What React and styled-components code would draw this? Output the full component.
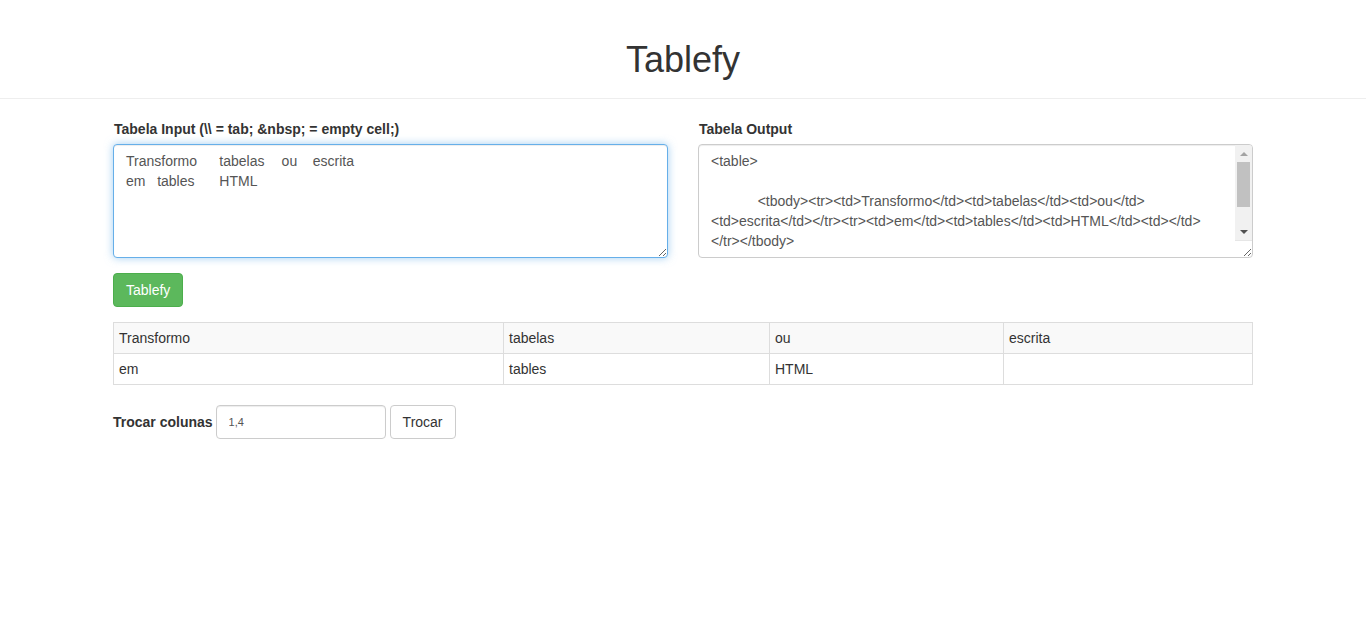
import React, { useState } from 'react';
import styled, { createGlobalStyle } from 'styled-components';

const GlobalStyle = createGlobalStyle`
    * { box-sizing: border-box; }
    body {
        margin: 0;
        background: #fff;
        color: #333;
        font-family: "Liberation Sans", Arial, sans-serif;
        font-size: 14px;
        line-height: 20px;
    }
`

const rows = [
    ['Transformo', 'tabelas', 'ou', 'escrita'],
    ['em', 'tables', 'HTML', ''],
]
const colWidths = [390, 266, 234, 249]

const toInput = (data) => data.map(r => r.join('\t')).join('\n')
const toHtml = (data) =>
    '<table>\n\n            <tbody>' +
    data.map(r => '<tr>' + r.map(c => `<td>${c}</td>`).join('') + '</tr>').join('') +
    '</tbody>\n\n        </table>\n'

const App = () => {
    const [input, setInput] = useState(toInput(rows))
    const [swap, setSwap] = useState('1,4')

    return (
        <>
            <GlobalStyle />
            <Header>
                <Title>Tablefy</Title>
            </Header>
            <Container>
                <Row>
                    <Column>
                        <Label>Tabela Input (\\ = tab; &amp;nbsp; = empty cell;)</Label>
                        <TextArea $focused value={input} onChange={(e) => setInput(e.target.value)} />
                    </Column>
                    <Column>
                        <Label>Tabela Output</Label>
                        <OutputWrap>
                            <TextArea $scroll readOnly value={toHtml(rows)} />
                            <ScrollBar>
                                <Arrow $up />
                                <Thumb />
                                <Arrow />
                            </ScrollBar>
                        </OutputWrap>
                    </Column>
                </Row>
                <GreenButton>Tablefy</GreenButton>
                <Table>
                    <colgroup>
                        {colWidths.map((w, i) => <Col key={i} $w={w} />)}
                    </colgroup>
                    <tbody>
                        {rows.map((r, i) => (
                            <Tr key={i} $striped={i % 2 === 0}>
                                {r.map((c, j) => <Td key={j}>{c}</Td>)}
                            </Tr>
                        ))}
                    </tbody>
                </Table>
                <SwapForm>
                    <SwapLabel>Trocar colunas</SwapLabel>
                    <SwapInput value={swap} onChange={(e) => setSwap(e.target.value)} />
                    <DefaultButton>Trocar</DefaultButton>
                </SwapForm>
            </Container>
        </>
    );
}

export default App;

const Header = styled.header`
    padding: 40px 0 18px;
    border-bottom: 1px solid #eee;
    text-align: center;
`

const Title = styled.h1`
    margin: 0;
    font-size: 36px;
    line-height: 40px;
    font-weight: 500;
    color: #333;
`

const Container = styled.div`
    width: 1170px;
    margin: 0 auto;
    padding: 20px 15px 0;
`

const Row = styled.div`
    display: grid;
    grid-template-columns: 1fr 1fr;
    column-gap: 30px;
    margin-bottom: 15px;
`

const Column = styled.div`
    display: flex;
    flex-direction: column;
`

const Label = styled.label`
    font-weight: bold;
    margin-bottom: 5px;
    padding-left: 1px;
`

const OutputWrap = styled.div`
    position: relative;
`

const TextArea = styled.textarea`
    display: block;
    width: 100%;
    height: 114px;
    padding: 6px ${p => p.$scroll ? '29px' : '12px'} 6px 12px;
    font-family: "Liberation Sans", Arial, sans-serif;
    font-size: 14px;
    line-height: 20px;
    color: #555;
    background: #fff;
    border: 1px solid ${p => p.$focused ? '#66afe9' : '#ccc'};
    border-radius: 4px;
    box-shadow: inset 0 1px 1px rgba(0,0,0,.075)${p => p.$focused ? ', 0 0 8px rgba(102,175,233,.6)' : ''};
    outline: none;
    resize: vertical;
    tab-size: 8;
    white-space: pre-wrap;
    overflow: hidden;
`

const ScrollBar = styled.div`
    position: absolute;
    top: 1px;
    right: 1px;
    bottom: 17px;
    width: 17px;
    display: flex;
    flex-direction: column;
    background: #f1f1f1;
    border-top-right-radius: 3px;
    border-bottom: 1px solid #e6e6e6;
`

const Arrow = styled.div`
    height: 17px;
    display: flex;
    align-items: center;
    justify-content: center;
    margin-top: ${p => p.$up ? '0' : 'auto'};

    &::before {
        content: '';
        width: 0;
        height: 0;
        border-left: 4px solid transparent;
        border-right: 4px solid transparent;
        ${p => p.$up
            ? 'border-bottom: 4px solid #a3a3a3;'
            : 'border-top: 4px solid #505050;'}
    }
`

const Thumb = styled.div`
    height: 45px;
    margin: 0 2px;
    background: #c1c1c1;
`

const GreenButton = styled.button`
    display: inline-block;
    height: 34px;
    padding: 6px 12px;
    font-family: inherit;
    font-size: 14px;
    line-height: 20px;
    color: #fff;
    background: #5cb85c;
    border: 1px solid #4cae4c;
    border-radius: 4px;
    cursor: pointer;
    align-self: flex-start;
`

const Table = styled.table`
    width: 1139px;
    margin: 15px 0 20px;
    border-collapse: collapse;
    border: 1px solid #ddd;
    table-layout: fixed;
`

const Col = styled.col`
    width: ${p => p.$w}px;
`

const Tr = styled.tr`
    background: ${p => p.$striped ? '#f9f9f9' : '#fff'};
`

const Td = styled.td`
    padding: 5px;
    border: 1px solid #ddd;
    line-height: 20px;
    color: #333;
`

const SwapForm = styled.div`
    display: flex;
    align-items: center;
    gap: 4px;
`

const SwapLabel = styled.label`
    font-weight: bold;
    margin-right: -1px;
`

const SwapInput = styled.input`
    width: 170px;
    height: 34px;
    padding: 5px 12px;
    font-family: inherit;
    font-size: 11px;
    color: #555;
    border: 1px solid #ccc;
    border-radius: 4px;
    box-shadow: inset 0 1px 1px rgba(0,0,0,.075);
    outline: none;
`

const DefaultButton = styled.button`
    height: 34px;
    padding: 6px 12px;
    font-family: inherit;
    font-size: 14px;
    line-height: 20px;
    color: #333;
    background: #fff;
    border: 1px solid #ccc;
    border-radius: 4px;
    cursor: pointer;
`
